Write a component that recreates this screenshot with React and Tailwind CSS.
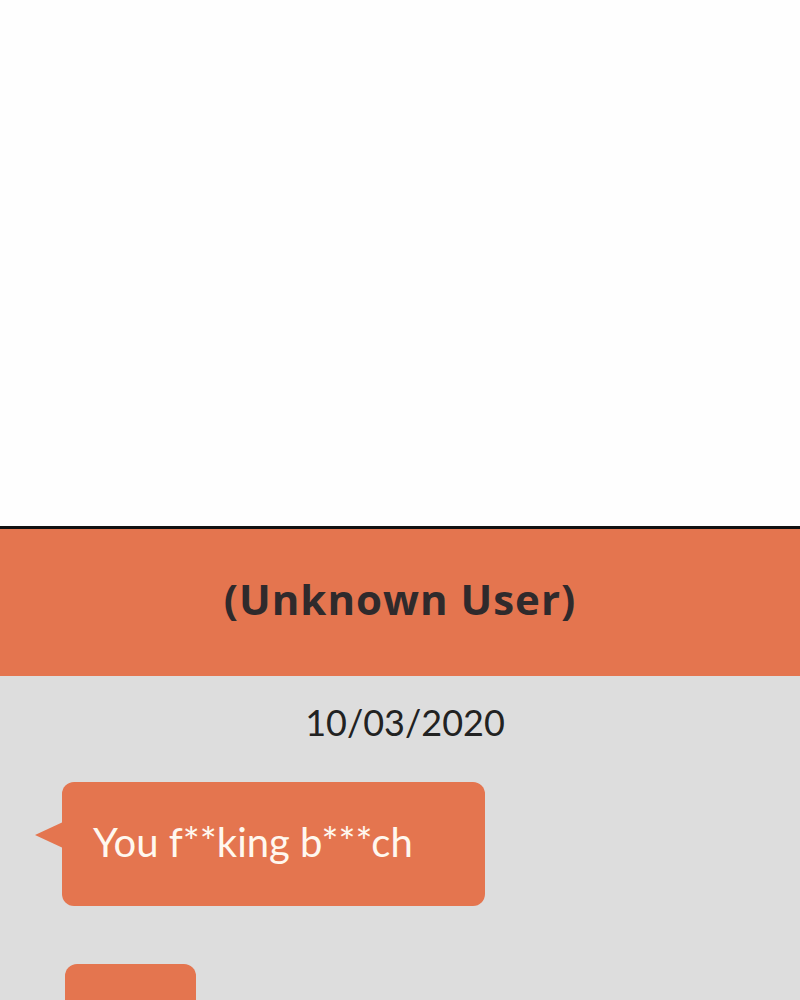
import React from 'react';

const font = { fontFamily: 'Lato, "Open Sans", sans-serif' };

const Bubble = ({ children, tail, className }) => (
    <div className={`relative shrink-0 bg-[#e4754f] rounded-[12px] ${className}`}>
        {tail && (
            <span className="absolute left-[-27px] top-[40px] w-0 h-0 border-y-[13px] border-y-transparent border-r-[28px] border-r-[#e4754f]" />
        )}
        {children}
    </div>
);

export default function App() {
    return (
        <div className="w-[800px] h-[1000px] overflow-hidden flex flex-col bg-white" style={font}>
            <div className="h-[526px] shrink-0 bg-[#fefefe]" />
            <div className="h-[3px] shrink-0 bg-[#111]" />
            <header className="h-[147px] shrink-0 bg-[#e4754f] flex items-center justify-center">
                <h1 className="text-[42px] font-bold text-[#2f2a2c] tracking-[1px] pb-[8px]" style={{ fontFamily: '"Open Sans", sans-serif' }}>
                    (Unknown User)
                </h1>
            </header>
            <main className="flex-1 bg-[#dddddd] flex flex-col">
                <div className="text-center text-[36px] text-[#222] pt-[28px] pl-[10px] leading-none">10/03/2020</div>
                <Bubble tail className="ml-[62px] mt-[42px] w-[423px] h-[124px] flex items-center">
                    <span className="pl-[31px] text-[40px] text-[#fff8ef] leading-none pb-[4px]">You f**king b***ch</span>
                </Bubble>
                <Bubble className="ml-[65px] mt-[58px] w-[131px] h-[80px]" />
            </main>
        </div>
    );
}
